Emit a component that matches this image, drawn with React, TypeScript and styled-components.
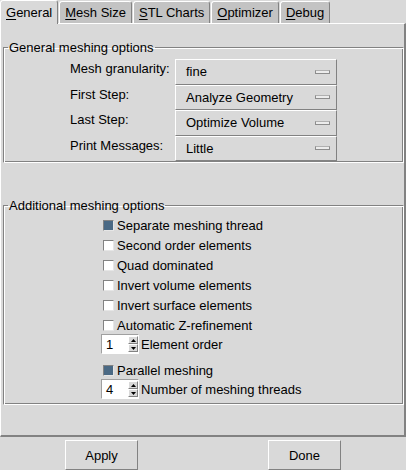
import React from 'react'
import styled, { createGlobalStyle } from 'styled-components'

const GlobalStyle = createGlobalStyle`
  html, body {
    margin: 0;
    padding: 0;
    background: #d9d9d9;
  }
  body {
    font-family: "Liberation Sans", Arial, sans-serif;
    font-size: 13px;
    line-height: 15px;
    color: #000;
  }
`

const tabs = [
  { key: 'G', rest: 'eneral' },
  { key: 'M', rest: 'esh Size' },
  { key: 'S', rest: 'TL Charts' },
  { key: 'O', rest: 'ptimizer' },
  { key: 'D', rest: 'ebug' },
]

const selects = [
  { label: 'Mesh granularity:', value: 'fine' },
  { label: 'First Step:', value: 'Analyze Geometry' },
  { label: 'Last Step:', value: 'Optimize Volume' },
  { label: 'Print Messages:', value: 'Little' },
]

const checks = [
  { label: 'Separate meshing thread', on: true },
  { label: 'Second order elements', on: false },
  { label: 'Quad dominated', on: false },
  { label: 'Invert volume elements', on: false },
  { label: 'Invert surface elements', on: false },
  { label: 'Automatic Z-refinement', on: false },
]

function Check({ label, on }: { label: string; on: boolean }) {
  return (
    <CheckRow>
      <Box $on={on} />
      <span>{label}</span>
    </CheckRow>
  )
}

function Spinner({ value, label }: { value: string; label: string }) {
  return (
    <SpinRow>
      <Spin>
        <SpinValue>{value}</SpinValue>
        <Arrows>
          <ArrowBtn>
            <svg width="5" height="3" viewBox="0 0 5 3">
              <path d="M2.5 0 L5 3 L0 3 Z" fill="#000" />
            </svg>
          </ArrowBtn>
          <ArrowBtn>
            <svg width="5" height="3" viewBox="0 0 5 3">
              <path d="M0 0 L5 0 L2.5 3 Z" fill="#000" />
            </svg>
          </ArrowBtn>
        </Arrows>
      </Spin>
      <span>{label}</span>
    </SpinRow>
  )
}

export default function App() {
  return (
    <Window>
      <GlobalStyle />
      <TabBar>
        {tabs.map((t, i) => (
          <Tab key={t.key} $active={i === 0}>
            <u>{t.key}</u>
            {t.rest}
          </Tab>
        ))}
      </TabBar>
      <Panel>
        <Frame>
          <Legend>General meshing options</Legend>
          <OptionGrid>
            {selects.map((s) => (
              <React.Fragment key={s.label}>
                <OptionLabel>{s.label}</OptionLabel>
                <Select>
                  <span>{s.value}</span>
                  <Indicator />
                </Select>
              </React.Fragment>
            ))}
          </OptionGrid>
        </Frame>

        <Frame $gap>
          <Legend>Additional meshing options</Legend>
          <CheckList>
            {checks.map((c) => (
              <Check key={c.label} label={c.label} on={c.on} />
            ))}
            <Spinner value="1" label="Element order" />
            <Spacer />
            <Check label="Parallel meshing" on />
            <Spinner value="4" label="Number of meshing threads" />
          </CheckList>
        </Frame>
      </Panel>
      <Footer>
        <Button>Apply</Button>
        <Button>Done</Button>
      </Footer>
    </Window>
  )
}

const Window = styled.div`
  width: 406px;
  height: 470px;
  overflow: hidden;
  display: flex;
  flex-direction: column;
  background: #d9d9d9;
`

const TabBar = styled.div`
  height: 24px;
  display: flex;
  align-items: flex-end;
  gap: 1px;
`

const Tab = styled.div<{ $active?: boolean }>`
  box-sizing: border-box;
  position: relative;
  z-index: 1;
  height: ${(p) => (p.$active ? 24 : 22)}px;
  margin-bottom: ${(p) => (p.$active ? 0 : 1)}px;
  padding: 0 5px 0 5px;
  display: flex;
  align-items: center;
  background: ${(p) => (p.$active ? '#d9d9d9' : '#c3c3c3')};
  border: 1px solid;
  border-bottom: none;
  border-color: #fff #828282 transparent #fff;
  border-radius: 3px 3px 0 0;
  white-space: nowrap;

  u {
    text-decoration-thickness: 1px;
    text-underline-offset: 2px;
  }
`

const Panel = styled.div`
  box-sizing: border-box;
  height: 414px;
  margin-top: -1px;
  border-top: 1px solid #fff;
  border-left: 1px solid #fff;
  border-right: 2px solid #828282;
  border-bottom: 2px solid #828282;
  padding: 16px 0 0 2px;
  display: flex;
  flex-direction: column;
`

const Frame = styled.fieldset<{ $gap?: boolean }>`
  margin: ${(p) => (p.$gap ? 35 : 0)}px 0 0 0;
  padding: 0 0 1px 0;
  min-inline-size: 0;
  border: 1px solid;
  border-color: #828282 #fff #fff #828282;
  box-shadow: inset 1px 1px 0 #fff, inset -1px -1px 0 #828282;
`

const Legend = styled.legend`
  margin-left: 4px;
  padding: 0 1px;
  line-height: 15px;
`

const OptionGrid = styled.div`
  display: grid;
  grid-template-columns: 105px 162px;
  grid-auto-rows: 25.5px;
  padding: 4px 0 0 66px;
`

const OptionLabel = styled.div`
  padding-top: 2px;
`

const Select = styled.div`
  box-sizing: border-box;
  display: flex;
  align-items: center;
  justify-content: space-between;
  padding: 0 6px 0 10px;
  border: 1px solid;
  border-color: #fff #828282 #828282 #fff;
`

const Indicator = styled.div`
  box-sizing: border-box;
  width: 15px;
  height: 4px;
  background: #ececec;
  border: 1px solid #8c8c8c;
  border-top-color: #b0b0b0;
`

const CheckList = styled.div`
  display: flex;
  flex-direction: column;
  padding: 2px 0 4px 97px;
`

const CheckRow = styled.div`
  height: 20px;
  display: flex;
  align-items: center;
  gap: 3px;
  padding-left: 2px;
`

const Box = styled.div<{ $on: boolean }>`
  box-sizing: border-box;
  width: 11px;
  height: 11px;
  background: ${(p) => (p.$on ? '#4a6984' : '#fff')};
  border: 1px solid;
  border-color: #828282 #e6e6e6 #e6e6e6 #828282;
`

const SpinRow = styled.div`
  height: 20px;
  margin-top: -1px;
  display: flex;
  align-items: center;
  gap: 2px;
`

const Spin = styled.div`
  box-sizing: border-box;
  width: 38px;
  height: 20px;
  display: flex;
  background: #fff;
  border: 1px solid;
  border-color: #a0a0a0 #fff #fff #a0a0a0;
`

const SpinValue = styled.div`
  flex: 1;
  padding-left: 4px;
  display: flex;
  align-items: center;
`

const Arrows = styled.div`
  width: 10px;
  display: flex;
  flex-direction: column;
  padding: 1px 0;
  box-sizing: border-box;
`

const ArrowBtn = styled.div`
  box-sizing: border-box;
  flex: 1;
  display: flex;
  align-items: center;
  justify-content: center;
  background: #d9d9d9;
  border: 1px solid;
  border-color: #fff #828282 #828282 #fff;
`

const Spacer = styled.div`
  height: 6px;
`

const Footer = styled.div`
  display: flex;
  justify-content: space-around;
  padding-top: 3px;
`

const Button = styled.div`
  box-sizing: border-box;
  width: 73px;
  height: 30px;
  display: flex;
  align-items: center;
  justify-content: center;
  background: #d9d9d9;
  border: 1px solid;
  border-color: #fff #828282 #828282 #fff;
`
